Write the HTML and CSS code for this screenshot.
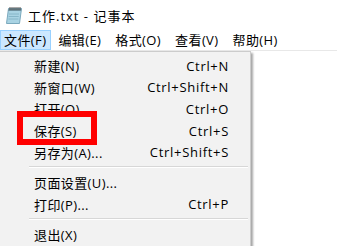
FILE: index.html
```html
<!DOCTYPE html>
<html>
<head>
    <meta charset="utf-8">
    <title>工作.txt - 记事本</title>
    <link rel="stylesheet" href="styles.css">
</head>
<body>
    <div class="titlebar">
        <svg class="app-icon" width="16" height="18" viewBox="0 0 16 18">
            <polygon points="2.5,2.5 15.5,2.5 13.5,17.5 0.5,17.5" fill="#a9d3e3" stroke="#7aa9bd"/>
            <polygon points="2.5,2.5 15.5,2.5 15,5 2.2,5" fill="#6f8f9c"/>
            <path d="M4 1v3M6 1v3M8 1v3M10 1v3M12 1v3M14 1v3" stroke="#555" stroke-width="1"/>
            <path d="M3 8h10M2.7 10.5h10M2.4 13h10" stroke="#86b6c8" stroke-width="1"/>
        </svg>
        <span class="title">工作.txt - 记事本</span>
    </div>

    <div class="menubar">
        <span class="menu-item active">文件(F)</span>
        <span class="menu-item">编辑(E)</span>
        <span class="menu-item">格式(O)</span>
        <span class="menu-item">查看(V)</span>
        <span class="menu-item">帮助(H)</span>
    </div>

    <div class="editor"></div>

    <!-- File menu dropdown -->
    <div class="dropdown">
        <div class="entry"><span>新建(N)</span><span class="key">Ctrl+N</span></div>
        <div class="entry"><span>新窗口(W)</span><span class="key">Ctrl+Shift+N</span></div>
        <div class="entry"><span>打开(O)</span><span class="key">Ctrl+O</span></div>
        <div class="entry"><span>保存(S)</span><span class="key">Ctrl+S</span></div>
        <div class="entry"><span>另存为(A)...</span><span class="key">Ctrl+Shift+S</span></div>
        <div class="separator"></div>
        <div class="entry"><span>页面设置(U)...</span><span class="key"></span></div>
        <div class="entry"><span>打印(P)...</span><span class="key">Ctrl+P</span></div>
        <div class="separator"></div>
        <div class="entry"><span>退出(X)</span><span class="key"></span></div>
    </div>

    <div class="highlight-box"></div>
</body>
</html>
```

FILE: styles.css
```css
body {
    margin: 0;
    width: 337px;
    height: 246px;
    overflow: hidden;
    position: relative;
    background: #fff;
    font-family: "Open Sans", "Noto Sans CJK SC", sans-serif;
    font-size: 13px;
    letter-spacing: 0.4px;
    color: #000;
}

.titlebar {
    height: 30px;
    display: flex;
    align-items: center;
    padding-left: 6px;
}

.app-icon {
    margin-right: 6px;
}

.title {
    letter-spacing: 1px;
}

.menubar {
    height: 20px;
    display: flex;
    align-items: center;
}

.menu-item {
    padding: 0 6px;
    line-height: 18px;
    border: 1px solid transparent;
    white-space: nowrap;
}

.menu-item.active {
    background-color: #cce8ff;
    border-color: #99d1ff;
    padding: 0 4px 0 3px;
}

.editor {
    border-top: 1px solid #e8e8e8;
    height: 195px;
}

.dropdown {
    position: absolute;
    left: -1px;
    top: 51px;
    width: 250px;
    height: 200px;
    padding-top: 3px;
    background: #f2f2f2;
    border: 1px solid #cccccc;
    box-shadow: 2px 2px 2px rgba(0, 0, 0, 0.35);
}

.entry {
    height: 21.6px;
    display: flex;
    align-items: center;
    justify-content: space-between;
    padding: 0 21px 0 34px;
    white-space: nowrap;
}

.entry .key {
    letter-spacing: 0.7px;
}

.separator {
    height: 1px;
    margin: 3px 2px 4px 29px;
    background: #d7d7d7;
    border-bottom: 1px solid #fff;
}

.highlight-box {
    position: absolute;
    left: 17px;
    top: 111px;
    width: 68px;
    height: 22px;
    border: 6px solid #ff0000;
}
```
